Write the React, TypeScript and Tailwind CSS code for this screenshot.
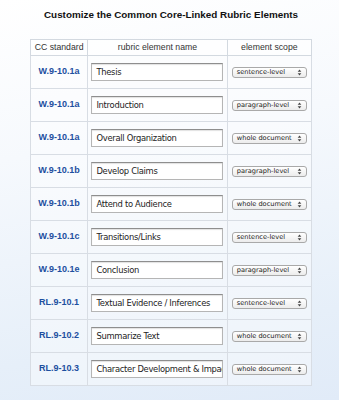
import React from "react";

const rows: [string, string, string][] = [
  ["W.9-10.1a", "Thesis", "sentence-level"],
  ["W.9-10.1a", "Introduction", "paragraph-level"],
  ["W.9-10.1a", "Overall Organization", "whole document"],
  ["W.9-10.1b", "Develop Claims", "paragraph-level"],
  ["W.9-10.1b", "Attend to Audience", "whole document"],
  ["W.9-10.1c", "Transitions/Links", "sentence-level"],
  ["W.9-10.1e", "Conclusion", "paragraph-level"],
  ["RL.9-10.1", "Textual Evidence / Inferences", "sentence-level"],
  ["RL.9-10.2", "Summarize Text", "whole document"],
  ["RL.9-10.3", "Character Development & Impact", "whole document"],
];

function Arrows() {
  return (
    <svg width="5" height="7" viewBox="0 0 5 7" className="shrink-0">
      <path d="M2.5 0.6 L4.3 2.8 L0.7 2.8 Z" fill="#444" />
      <path d="M2.5 6.4 L4.3 4.2 L0.7 4.2 Z" fill="#444" />
    </svg>
  );
}

export default function App() {
  return (
    <div
      className="w-[339px] h-[400px] overflow-hidden"
      style={{ background: "linear-gradient(170deg, #ffffff 0%, #f6f9fd 35%, #e6eff9 80%, #e1ebf8 100%)" }}
    >
      <div className="pl-[30px] w-[312px]">
        <div
          className="h-[30px] flex items-center justify-center text-[9.9px] font-bold text-[#111]"
          style={{ fontFamily: "'Liberation Sans', Arial, sans-serif" }}
        >
          Customize the Common Core-Linked Rubric Elements
        </div>
        <div className="h-[9px]" />
        <table
          className="w-[282px] border-collapse border border-[#d3d9e0] bg-white/40"
          style={{ fontFamily: "'Liberation Sans', Arial, sans-serif" }}
        >
          <colgroup>
            <col className="w-[57px]" />
            <col className="w-[139px]" />
            <col className="w-[84px]" />
          </colgroup>
          <thead>
            <tr className="h-[16px] bg-white/60">
              <th className="border border-[#d3d9e0] text-[8.7px] font-normal text-[#333] leading-none p-0">CC standard</th>
              <th className="border border-[#d3d9e0] text-[8.7px] font-normal text-[#333] leading-none p-0">rubric element name</th>
              <th className="border border-[#d3d9e0] text-[8.7px] font-normal text-[#333] leading-none p-0">element scope</th>
            </tr>
          </thead>
          <tbody>
            {rows.map(([std, name, scope], i) => (
              <tr key={i} className="h-[33px]">
                <td className="border border-[#d8dde4] text-center text-[9px] font-bold text-[#1d4fa0] p-0">{std}</td>
                <td className="border border-[#d8dde4] p-0">
                  <div className="flex justify-center">
                    <div
                      className="w-[132px] h-[18px] bg-white border border-[#b5b5b5] border-t-[#8e8e8e] flex items-center pl-[4px] overflow-hidden whitespace-nowrap text-[8.4px] tracking-[-0.3px] text-[#222]"
                      style={{ fontFamily: "'DejaVu Sans', Verdana, sans-serif", boxShadow: "inset 0 1px 1px rgba(0,0,0,0.12)" }}
                    >
                      {name}
                    </div>
                  </div>
                </td>
                <td className="border border-[#d8dde4] p-0">
                  <div className="flex justify-center">
                    <div
                      className="w-[75px] h-[11px] rounded-[3px] border border-[#a9a9a9] flex items-center justify-between pl-[4px] pr-[4px] text-[6.6px] text-[#222] leading-none whitespace-nowrap"
                      style={{ fontFamily: "'DejaVu Sans', Verdana, sans-serif", background: "linear-gradient(#ffffff, #ececec)" }}
                    >
                      <span>{scope}</span>
                      <Arrows />
                    </div>
                  </div>
                </td>
              </tr>
            ))}
          </tbody>
        </table>
      </div>
    </div>
  );
}
